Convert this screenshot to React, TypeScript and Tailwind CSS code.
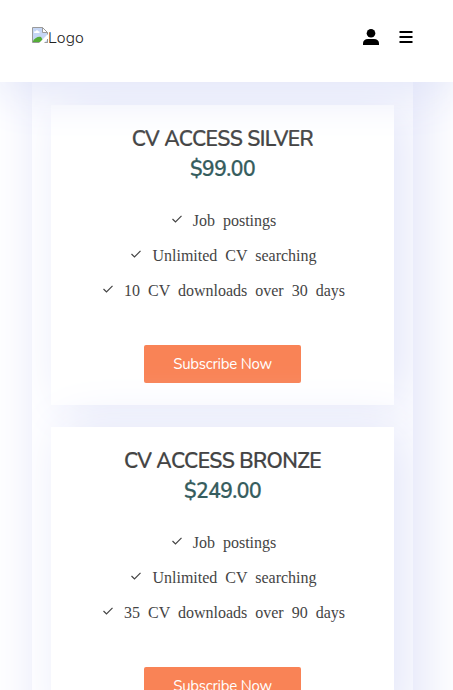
import React from "react";

type Plan = { name: string; price: string; features: string[] };

const plans: Plan[] = [
  {
    name: "CV ACCESS SILVER",
    price: "$99.00",
    features: ["Job postings", "Unlimited CV searching", "10 CV downloads over 30 days"],
  },
  {
    name: "CV ACCESS BRONZE",
    price: "$249.00",
    features: ["Job postings", "Unlimited CV searching", "35 CV downloads over 90 days"],
  },
];

function BrokenImage() {
  return (
    <svg width="16" height="16" viewBox="0 0 16 16" className="shrink-0">
      <path d="M.5.5h10l5 5v10H.5z" fill="#c5d6f5" stroke="#9a9a9a" />
      <path d="M2 5.5c0-1 1-1.4 1.7-1C4 3 6 3 6.300 4.300 8 4 8 6 7 6H2.500z" fill="#fff" />
      <path d="M1 15v-1c2-3 5-5 8-4l3 5z" fill="#55ad38" />
      <path d="M10.500.5v5h5z" fill="#fff" stroke="#9a9a9a" />
      <path d="M16 7 7 16h5l4-4z" fill="#fff" />
      <path d="M13 15.500h2.500V12" fill="none" stroke="#9a9a9a" />
    </svg>
  );
}

function Check() {
  return (
    <svg width="12" height="10" viewBox="0 0 12 10" className="mr-[10px] -mt-[3px] shrink-0">
      <path d="M1.500 5 4.500 8 10.500 1.800" fill="none" stroke="#444" strokeWidth="1.200" />
    </svg>
  );
}

function Card({ plan }: { plan: Plan }) {
  return (
    <section className="flex h-[300px] shrink-0 flex-col items-center bg-white pt-[19px] shadow-[12px_0_50px_#e2e5f9]">
      <h2 className="text-[21px] leading-[30px] font-semibold tracking-[-0.56px] whitespace-nowrap text-[#444] [-webkit-text-stroke:0.2px_#444]">
        {plan.name}
      </h2>
      <p className="text-[21px] leading-[30px] font-semibold tracking-[-0.5px] text-[#365d5e] [-webkit-text-stroke:0.2px_#365d5e]">
        {plan.price}
      </p>
      <ul className="mt-[19px] pl-[2px] font-['Liberation_Serif',serif] text-[16px] leading-[35px] text-[#444] [word-spacing:4px]">
        {plan.features.map((f) => (
          <li key={f} className="flex h-[35px] items-center justify-center whitespace-nowrap">
            <Check />
            <span>{f}</span>
          </li>
        ))}
      </ul>
      <button className="mt-[37px] h-[38px] w-[157px] rounded-[2px] bg-[#f98356] text-[15px] tracking-[-0.25px] text-white">
        Subscribe Now
      </button>
    </section>
  );
}

export default function App() {
  return (
    <div className="flex h-[690px] flex-col overflow-hidden bg-white font-['Nunito','Lato',sans-serif]">
      <header className="z-10 flex h-[82px] shrink-0 items-start justify-between bg-white pr-[40px] pl-8 shadow-[0_10px_50px_#e0e4f8]">
        <div className="mt-[27px] flex text-[16px] leading-[22px] tracking-[0.2px] text-[#222]">
          <BrokenImage />
          <span className="font-light">Logo</span>
        </div>
        <nav className="mt-[29px] flex items-center gap-[20px]">
          <svg width="16" height="16" viewBox="0 0 16 16" fill="#000">
            <circle cx="8" cy="4.300" r="4.300" />
            <path d="M0 16v-1.500C0 11.500 2 10 5 10h6c3 0 5 1.500 5 4.500V16z" />
          </svg>
          <svg width="14" height="16" viewBox="0 0 14 16" stroke="#000" strokeWidth="2">
            <path d="M.5 3h13M.5 8h13M.5 13h13" />
          </svg>
        </nav>
      </header>
      <main className="min-h-0 flex-1 pr-[40px] pl-8">
        <div className="-mt-[60px] h-[900px] bg-white shadow-[8px_0_50px_#dfe2f8]">
          <div className="flex h-full flex-col gap-[22px] overflow-hidden px-[19px] pt-[83px]">
            {plans.map((plan) => (
              <Card key={plan.name} plan={plan} />
            ))}
          </div>
        </div>
      </main>
    </div>
  );
}
